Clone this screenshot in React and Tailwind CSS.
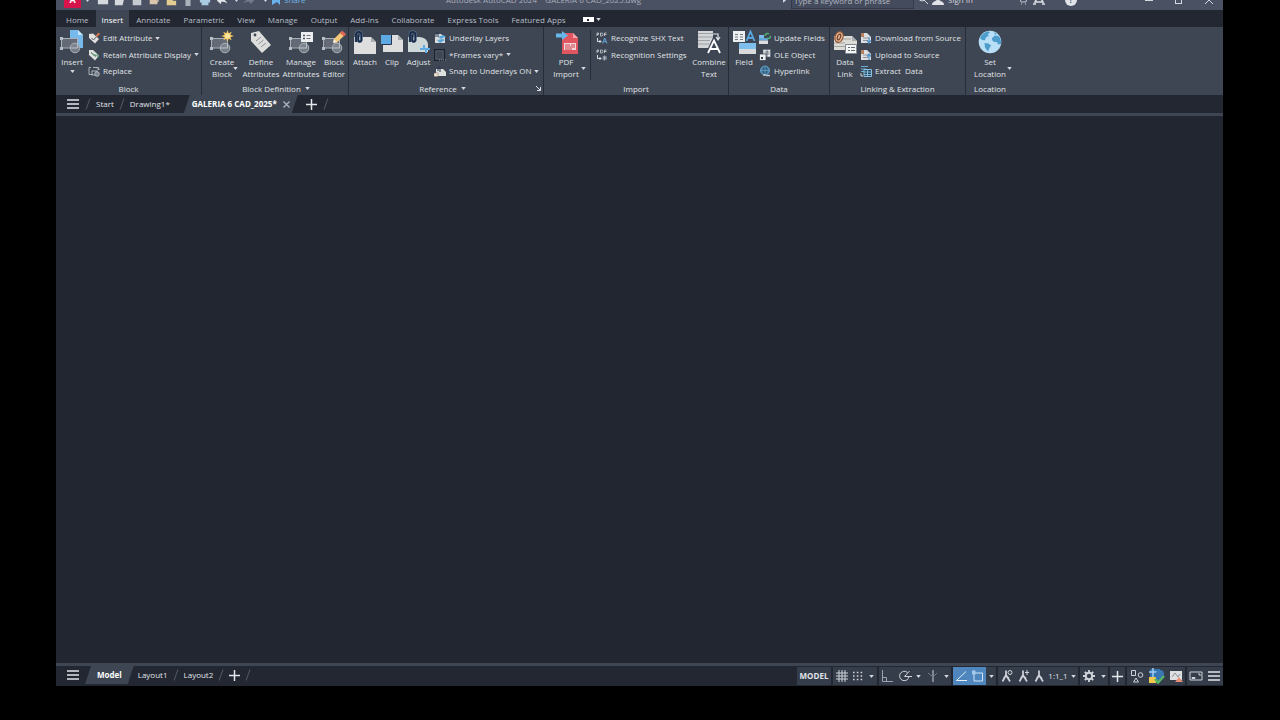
import React from "react";
import clsx from "clsx";

const MENU = ["Home", "Insert", "Annotate", "Parametric", "View", "Manage", "Output", "Add-ins", "Collaborate", "Express Tools", "Featured Apps"];

// ---------- shared bits ----------
const Caret = ({ className }) => (
  <svg viewBox="0 0 6 4" className={clsx("w-[5px] h-[3px] shrink-0 fill-[#d5d9df]", className)}>
    <path d="M0 0h6L3 4z" />
  </svg>
);

const Slash = () => (
  <svg viewBox="0 0 6 12" className="w-1.5 h-3 shrink-0 stroke-[#545b69] fill-none">
    <path d="M5 0.5L1 11.5" />
  </svg>
);

const Big = ({ children }) => (
  <svg viewBox="0 0 24 24" className="w-6 h-6 shrink-0" fill="none">{children}</svg>
);

const Small = ({ children }) => (
  <svg viewBox="0 0 12 12" className="w-3 h-3 shrink-0" fill="none">{children}</svg>
);

const Burger = () => (
  <svg viewBox="0 0 12 10" className="w-3 h-2.5" stroke="#e3e6ea" strokeWidth="1.5">
    <path d="M0 1h12M0 5h12M0 9h12" />
  </svg>
);

const Plus = () => (
  <svg viewBox="0 0 11 11" className="w-[11px] h-[11px]" stroke="#e3e6ea" strokeWidth="1.5">
    <path d="M5.5 0v11M0 5.5h11" />
  </svg>
);

// grey rectangle with a circle on its corner, used by every block tool
const BlockShape = () => (
  <>
    <rect x="1.5" y="8.5" width="16" height="9.5" fill="#646b76" stroke="#a9afb8" />
    <path d="M0 7h3v3H0zM0 17h3v3H0z" fill="#b9bec6" />
    <circle cx="15" cy="18" r="4.8" fill="#858b95" fillOpacity="0.8" stroke="#aab0b9" />
    <path d="M10.5 18H17.5V13.5" stroke="#c3c8cf" strokeWidth="0.8" />
  </>
);

const Page = () => <path d="M1 7h17l5 5v12H1z" fill="#dddedd" />;
const Clip = () => (
  <>
    <path d="M3 12V4.500a2.700 2.700 0 0 1 5.400 0V10a1.600 1.600 0 0 1-3.200 0V5" stroke="#6c86a8" strokeWidth="2.600" />
    <path d="M3 12V4.500a2.700 2.700 0 0 1 5.400 0V10a1.600 1.600 0 0 1-3.200 0V5" stroke="#182a46" strokeWidth="1.800" />
  </>
);

// ---------- large icons ----------
const InsertIcon = () => (
  <Big>
    <path d="M10 0h8l5 5v13H10z" fill="#76b9ea" />
    <path d="M18 0v5h5z" fill="#c5e3f8" />
    <BlockShape />
  </Big>
);
const CreateIcon = () => (
  <Big>
    <BlockShape />
    <path d="M17.500 0l1.200 3.300 3-1.500-1.300 3.100 3.600 1.100-3.600 1.200 1.300 3-3-1.400-1.200 3.200-1.200-3.200-3 1.400 1.300-3L11 6l3.600-1.100-1.300-3.100 3 1.500z" fill="#f5c964" />
    <circle cx="17.500" cy="6" r="2.500" fill="#ffe6a0" />
  </Big>
);
const TagIcon = () => (
  <Big>
    <path d="M2 3l8-2 12 14-9 8L2 11z" fill="#dddedc" />
    <circle cx="6" cy="5" r="1.400" fill="#3b4453" />
    <path d="M7 11l5-4M9.500 14l5-4M12 17l5-4" stroke="#8c9299" strokeWidth="1" />
  </Big>
);
const ManageIcon = () => (
  <Big>
    <BlockShape />
    <path d="M12 2h12v10H12z" fill="#eceeef" />
    <path d="M14 5.500h2M14 8.500h2" stroke="#4a5261" strokeWidth="1.400" />
    <path d="M17.500 5.500h4M17.500 8.500h4" stroke="#70757f" />
  </Big>
);
const EditorIcon = () => (
  <Big>
    <BlockShape />
    <path d="M11 13l1-4 7-7 3.500 3.500-7.500 7z" fill="#f2c778" />
    <path d="M18 3l2-2.500L24 4l-2 2.500z" fill="#dd6657" />
    <path d="M11 13l1-4 3 3z" fill="#f3eee1" />
  </Big>
);
const AttachIcon = () => (
  <Big>
    <Page />
    <path d="M18 7v5h5z" fill="#a9adb1" />
    <Clip />
  </Big>
);
const ClipIcon = () => (
  <Big>
    <path d="M3 5h15l5 5v12H3z" fill="#dddedd" />
    <path d="M18 5v5h5z" fill="#a9adb1" />
    <path d="M1 5h10v9H1z" fill="#5fa9e2" />
    <path d="M11.500 5v9.500H2" stroke="#25344b" />
  </Big>
);
const AdjustIcon = () => (
  <Big>
    <path d="M1 7h11c6 0 9 4 9 8v7H1z" fill="#cfd8d8" />
    <Clip />
    <path d="M13 18h3v-3h2v3h5v2h-3v3h-2v-3h-5z" fill="#62ace3" />
  </Big>
);
const PdfIcon = () => (
  <Big>
    <path d="M8 3h11l5 5v16H8z" fill="#df5560" />
    <path d="M19 3v5h5z" fill="#f4a7ac" />
    <path d="M10 13h12v7H10z" fill="#f1d7d9" />
    <path d="M11 15h5M11 17h10M17 15h4M11 19h7" stroke="#d33f4c" strokeWidth="1.200" />
    <path d="M2 3.500h6V1l6 4.500L8 10V7.500H2z" fill="#68b7ea" />
  </Big>
);
const CombineIcon = () => (
  <Big>
    <path d="M1 1h15v17H1z" fill="#d3d5d7" />
    <path d="M1 3.500h15M1 7h15M1 10.500h12M1 14h11" stroke="#8e939b" strokeWidth="0.800" />
    <path d="M16 4h5v5M19 7l2 3 2-3" stroke="#e2e5e8" strokeWidth="1.200" />
    <path d="M11 23l6-13 6 13M13.500 19h7" stroke="#3b4453" strokeWidth="4" />
    <path d="M11 23l6-12.500L23 23M13.500 19h7" stroke="#fff" strokeWidth="1.800" />
  </Big>
);
const FieldIcon = () => (
  <Big>
    <path d="M1 1h12v11H1z" fill="#eceef0" />
    <path d="M3 4.500h3M3 7h3M3 9.500h3M8 4.500h3M8 7h3M8 9.500h3" stroke="#737a86" />
    <path d="M14.500 11L18.500 1.500 22.500 11M16 8h5" stroke="#58a5de" strokeWidth="1.800" />
    <path d="M7 13h17v6H7z" fill="#7fbfee" />
    <path d="M7 19h17v5H7z" fill="#d9dadb" />
  </Big>
);
const LinkIcon = () => (
  <Big>
    <path d="M1 6h18l5 5v9H1z" fill="#dcdbd6" />
    <path d="M19 6v5h5z" fill="#a9adb1" />
    <path d="M1 13h11M1 16.500h11M9 9h9" stroke="#a2a49f" />
    <ellipse cx="6" cy="7" rx="4" ry="5.500" fill="#e8b48f" stroke="#8e5636" strokeWidth="1.200" transform="rotate(20 6 7)" />
    <ellipse cx="6" cy="7" rx="1.500" ry="3" stroke="#6f4632" strokeWidth="1.200" transform="rotate(20 6 7)" />
    <path d="M12.500 14.500H23.500v9H12.500z" fill="#f5f6f6" stroke="#828891" />
    <path d="M15 17.500h2M18 17.500h4M15 20.500h2M18 20.500h4" stroke="#626975" />
  </Big>
);
const GlobeIcon = () => (
  <Big>
    <circle cx="12" cy="12" r="11.300" fill="#b8dff6" />
    <path d="M2 8C3.500 4.500 6.500 2 10 1.200l2 1.500-2.500 1.500 1.500 1.500-3 1.500-1 3L4 10zM14 8l3-2.500 3.500.500c2.200 2.500 2.800 5 2.500 8l-3 .500-1-2.500-3 0L14 10zM6.500 13l4 .500 2.500 2-1.500 2.500-1.500 3.500-3-4zM16 2.200l3 1.500-2 1z" fill="#4c9ccc" />
  </Big>
);

// ---------- small icons ----------
const EditTag = () => (
  <Small>
    <path d="M1 2l4-.500L11 7l-4 4.500L1 6z" fill="#dfe0df" />
    <path d="M3.500 6l2 2 3.500-4" stroke="#59606b" />
    <path d="M7.500 4l3-3.500L12 2 9 5z" fill="#d9794f" />
  </Small>
);
const RetainTag = () => (
  <Small>
    <path d="M1 1l4 0 6 5.500-4 5L1 6z" fill="#dfe0df" />
    <path d="M3 3.500l5 4M5 6h5v3" stroke="#5c9270" strokeWidth="1.200" />
  </Small>
);
const ReplaceIcon = () => (
  <Small>
    <path d="M3 2.500H1v7h4M5 2.500h5.500V5M9 3.500l1.500 1.500L12 3.500" stroke="#b8bdc5" strokeWidth="0.900" />
    <rect x="4" y="6" width="5" height="4" stroke="#b8bdc5" strokeWidth="0.900" />
    <circle cx="9" cy="9" r="2.300" fill="#7b828d" stroke="#c1c6cd" strokeWidth="0.800" />
  </Small>
);
const LayersIcon = () => (
  <Small>
    <path d="M1 2h6l4 3v6H1z" fill="#d9dcdd" />
    <path d="M4 5l5-2 3 1.500-5 2.500zM3 8l6-1 2 1-5 3z" fill="#5ca5d8" />
    <path d="M2 5V2a1 1 0 0 1 2 0v3" stroke="#24334b" />
  </Small>
);
const FrameIcon = () => (
  <Small>
    <path d="M.500.500h10v11H.500z" stroke="#1b212d" strokeWidth="1.200" />
    <path d="M2 2h7v8H2z" stroke="#5c6574" strokeWidth="0.600" />
    <path d="M5 11h7" stroke="#8d94a0" strokeDasharray="1 1" />
  </Small>
);
const SnapIcon = () => (
  <Small>
    <path d="M2 4h7l3 3v4H2z" fill="#dedfdf" />
    <path d="M4 6V3a1 1 0 0 1 2 0v4" stroke="#24334b" />
    <path d="M0 8h4v3.500H0z" fill="#f0e9dd" stroke="#85624a" strokeWidth="0.500" />
  </Small>
);
const ShxIcon = ({ gear }) => (
  <Small>
    <path d="M1 4V1h1.500v1.500H1M4.500 1v3h1a1.500 1.500 0 0 0 0-3zM8.500 4V1H10.500M8.500 2.500h2" stroke="#d0d4da" strokeWidth="0.800" />
    <path d="M1.500 6v3.500H5M3.500 8L5 9.500 3.500 11" stroke="#d8dce1" />
    {gear
      ? <path d="M8.500 6.500v5M6.500 9H11M7 7.200l3.200 3.600M10.200 7.200L7 10.800" stroke="#aeb9c9" strokeWidth="0.900" />
      : <path d="M6.500 11.500L8.700 6 11 11.500M7.300 9.700H10" stroke="#67a8dd" />}
  </Small>
);
const UpdateIcon = () => (
  <Small>
    <path d="M0 3h5v3H0z" fill="#7cbbe9" />
    <path d="M0 6h9v2.500H0z" fill="#62a6da" />
    <path d="M0 8.500h9V12H0z" fill="#dadcdd" />
    <path d="M6 4a2.500 2.500 0 0 1 4-2M11.500 3.500a2.500 2.500 0 0 1-4 2.500" stroke="#52b077" strokeWidth="1.500" />
  </Small>
);
const OleIcon = () => (
  <Small>
    <path d="M4 .500h7.500V8H4z" fill="#ebedef" stroke="#555d6a" strokeWidth="0.600" />
    <path d="M5.500 3h5M5.500 5h5M8 1v7" stroke="#434b5a" strokeWidth="0.700" />
    <path d="M.500 5H7v6.500H.500z" fill="#eceeef" stroke="#343c49" strokeWidth="0.700" />
    <path d="M2 8h2v2H2z" fill="#343c49" />
  </Small>
);
const HyperIcon = () => (
  <Small>
    <circle cx="6" cy="5.500" r="4.500" fill="#315f80" stroke="#6fb1d9" strokeWidth="0.800" />
    <path d="M1.500 5.500h9M6 1v9M3.500 2c-1 2-1 5 0 7M8.500 2c1 2 1 5 0 7" stroke="#76b5da" strokeWidth="0.600" />
    <path d="M4 10h3M7 10.500h4" stroke="#c2c7ce" strokeWidth="1.500" />
  </Small>
);
const SheetIcon = ({ up }) => (
  <Small>
    <path d="M1 1h6l4 4v6H1z" fill="#dcdedf" />
    <path d="M1 1h3v4H1z" fill="#b5805f" />
    <path d="M3 6h5M3 8.500h5" stroke="#7b828d" strokeWidth="0.800" />
    {up
      ? <path d="M9 11V6M7 7.500L9 5l2 2.500" stroke="#5694c6" strokeWidth="1.300" />
      : <path d="M9 5v5M7 8.500l2 2.500 2-2.500" stroke="#5694c6" strokeWidth="1.300" />}
  </Small>
);
const ExtractIcon = () => (
  <Small>
    <path d="M1 1.500h7M1 4h5M1 6.500h3" stroke="#68abd7" strokeWidth="1.200" />
    <path d="M4 4.500h7.500v7H4z" fill="#224b68" stroke="#9acbea" strokeWidth="0.900" />
    <path d="M4 7h7.500M4 9.500h7.500M7.500 4.500v7" stroke="#9acbea" strokeWidth="0.800" />
    <path d="M1 8v3h2" stroke="#cdd2d8" />
  </Small>
);

// ---------- ribbon data ----------
const PANELS = [
  {
    title: "Block", width: "w-[146px]",
    big: [{ icon: <InsertIcon />, label: ["Insert"], width: "w-8", under: true }],
    rows: [
      { icon: <EditTag />, label: "Edit Attribute", caret: true },
      { icon: <RetainTag />, label: "Retain Attribute Display", caret: true },
      { icon: <ReplaceIcon />, label: "Replace" },
    ],
  },
  {
    title: "Block Definition", width: "w-[147px] pl-0.5", more: true,
    big: [
      { icon: <CreateIcon />, label: ["Create", "Block"], width: "w-9", caret: true },
      { icon: <TagIcon />, label: ["Define", "Attributes"], width: "w-[42px]" },
      { icon: <ManageIcon />, label: ["Manage", "Attributes"], width: "w-[38px]" },
      { icon: <EditorIcon />, label: ["Block", "Editor"], width: "w-7" },
    ],
  },
  {
    title: "Reference", width: "w-[195px]", more: true, launcher: true,
    big: [
      { icon: <AttachIcon />, label: ["Attach"], width: "w-8" },
      { icon: <ClipIcon />, label: ["Clip"], width: "w-[22px]" },
      { icon: <AdjustIcon />, label: ["Adjust"], width: "w-[31px]" },
    ],
    rows: [
      { icon: <LayersIcon />, label: "Underlay Layers" },
      { icon: <FrameIcon />, label: "*Frames vary*", caret: true },
      { icon: <SnapIcon />, label: "Snap to Underlays ON", caret: true },
    ],
  },
  {
    title: "Import", width: "w-[185px]",
    big: [{ icon: <PdfIcon />, label: ["PDF", "Import"], width: "w-11", caret: true }],
    divider: true,
    rows: [
      { icon: <ShxIcon />, label: "Recognize SHX Text" },
      { icon: <ShxIcon gear />, label: "Recognition Settings" },
    ],
    tail: [{ icon: <CombineIcon />, label: ["Combine", "Text"], width: "w-[38px]" }],
  },
  {
    title: "Data", width: "w-[101px]",
    big: [{ icon: <FieldIcon />, label: ["Field"], width: "w-[30px]" }],
    rows: [
      { icon: <UpdateIcon />, label: "Update Fields" },
      { icon: <OleIcon />, label: "OLE Object" },
      { icon: <HyperIcon />, label: "Hyperlink" },
    ],
  },
  {
    title: "Linking & Extraction", width: "w-[136px]",
    big: [{ icon: <LinkIcon />, label: ["Data", "Link"], width: "w-[30px]" }],
    rows: [
      { icon: <SheetIcon />, label: "Download from Source" },
      { icon: <SheetIcon up />, label: "Upload to Source" },
      { icon: <ExtractIcon />, label: "Extract  Data" },
    ],
  },
  {
    title: "Location", width: "w-12", last: true,
    big: [{ icon: <GlobeIcon />, label: ["Set", "Location"], width: "w-12", caret: true }],
  },
];

function BigButton({ item }) {
  return (
    <button className={clsx("relative flex flex-col items-center shrink-0 h-[50px] leading-[12px]", item.width)}>
      {item.icon}
      <span className="flex flex-col items-center pt-0.5">
        {item.label.map((line) => <span key={line}>{line}</span>)}
      </span>
      {item.under && <Caret className="mt-0.5" />}
      {item.caret && <Caret className="absolute right-0.5 bottom-2.5" />}
    </button>
  );
}

function Panel({ panel }) {
  return (
    <section className={clsx("flex flex-col shrink-0 pt-[3px]", panel.width, !panel.last && "border-r border-[#272d38]")}>
      <div className="flex h-[52px]">
        {panel.big.map((item) => <BigButton key={item.label.join(" ")} item={item} />)}
        {panel.divider && <div className="w-px h-[50px] bg-[#272d38] ml-0.5 mr-[5px]" />}
        {panel.rows && (
          <div className={clsx("flex flex-col h-[49px] flex-1", panel.rows.length === 3 ? "justify-between" : "gap-px")}>
            {panel.rows.map((row) => (
              <button key={row.label} className="flex items-center h-4 gap-[3px] whitespace-pre">
                {row.icon}
                {row.label}
                {row.caret && <Caret />}
              </button>
            ))}
          </div>
        )}
        {panel.tail?.map((item) => <BigButton key={item.label.join(" ")} item={item} />)}
      </div>
      <div className="flex items-center h-[13px]">
        <h2 className="flex flex-1 items-center justify-center gap-1 whitespace-nowrap">
          {panel.title}
          {panel.more && <Caret />}
        </h2>
        {panel.launcher && (
          <button aria-label="Reference settings" className="mr-0.5">
            <svg viewBox="0 0 5 5" className="w-[5px] h-[5px]" stroke="#dfe2e6" fill="none"><path d="M0 0l4.500 4.500M4.500 1v3.500H1" /></svg>
          </button>
        )}
      </div>
    </section>
  );
}

// ---------- title bar ----------
const QUICK = [
  { name: "New", d: "M1 5h12v8H1z", fill: "#d5d8dc" },
  { name: "Open", d: "M1 5h4l1 1h6l-2 8H1z", fill: "#d5d8dc" },
  { name: "Save", d: "M2 3h10v11H2zM4 9h6v5H4z", fill: "#c5cad1" },
  { name: "Save As", d: "M2 3h9v10H2zM8 12l4-4 1 1-4 4z", fill: "#d9c5ae" },
  { name: "Open from Web", d: "M2 4h7v10H2zM8 9h5v5H8z", fill: "#e3cc91" },
  { name: "Save to Mobile", d: "M4 2h6v13H4z", fill: "#a9b1bb" },
  { name: "Plot", d: "M1 6h12v5H1zM3 11h8v3H3z", fill: "#a9cbdf" },
  { name: "Undo", d: "M1 9l5-5v3c4 0 6 2 7 5-2-2-4-2-7-2v3z", fill: "#e1e4e8" },
];

function TitleBar() {
  return (
    <header className="h-2.5 overflow-hidden bg-[#4a5163] text-[#a9aebb]">
      <div className="flex items-center h-5 -mt-2.5">
        <div className="flex items-center w-[390px] shrink-0 pl-2">
          <button aria-label="Application menu" className="flex items-center justify-center w-[17px] h-[15px] bg-[#d5144b] text-white text-[9px] font-bold">A</button>
          <Caret className="ml-1" />
          <div className="flex pl-1">
            {QUICK.map((q) => (
              <button key={q.name} aria-label={q.name} className="flex justify-center w-[17px]">
                <svg viewBox="0 0 14 16" className="w-3 h-4"><path d={q.d} fill={q.fill} /></svg>
              </button>
            ))}
          </div>
          <Caret className="ml-1" />
          <svg viewBox="0 0 14 16" className="w-3 h-4 mx-1"><path d="M13 9L8 4v3C4 7 2 9 1 12c2-2 4-2 7-2v3z" fill="#727989" /></svg>
          <Caret className="mx-1" />
          <button className="flex items-center gap-1 text-[#72b9ed]">
            <svg viewBox="0 0 8 12" className="w-2 h-3"><path d="M0 3l8-2v10l-3-3-5 3z" fill="#69b2ec" /></svg>
            Share
          </button>
        </div>
        <h1 className="flex-1 whitespace-pre">Autodesk AutoCAD 2024    GALERIA 6 CAD_2025.dwg</h1>
        <div className="flex items-center w-[441px] shrink-0 gap-1">
          <Caret className="-rotate-90" />
          <input aria-label="Search" placeholder="Type a keyword or phrase" className="w-[123px] h-[17px] px-0.5 bg-[#444b5c] border border-[#343a48] placeholder:text-[#b0b5c0]" />
          <button aria-label="Find">
            <svg viewBox="0 0 10 12" className="w-2.5 h-3" stroke="#d5d8de" fill="none"><circle cx="4" cy="4" r="3" /><path d="M6 6l4 4" /></svg>
          </button>
          <button className="flex items-center gap-1 text-[#d5d8de]">
            <svg viewBox="0 0 12 12" className="w-3 h-3" fill="#dfe2e6"><circle cx="6" cy="4" r="3" /><path d="M0 11c0-6 12-6 12 0z" /></svg>
            Sign In
          </button>
          <div className="flex items-center ml-10 gap-1.5">
            <svg viewBox="0 0 10 12" className="w-2.5 h-3" stroke="#c5cad1" fill="none"><path d="M0 1h2l2 7h5l1-5H3" /><path d="M4 10h1M8 10h1" /></svg>
            <svg viewBox="0 0 12 12" className="w-3 h-3" stroke="#e0e3e7" strokeWidth="1.500" fill="none"><path d="M6 1l4 7H2z" /><path d="M0 10h3M9 10h3" /></svg>
            <span className="flex items-center justify-center w-3 h-3 ml-3.5 rounded-full bg-[#e1e4e8] text-[#4a5163] font-bold">?</span>
          </div>
          <div className="flex items-center justify-between flex-1 pl-16 pr-2.5">
            <button aria-label="Minimize" className="w-2 h-px bg-[#d5d8de]" />
            <button aria-label="Maximize" className="w-[7px] h-[7px] border border-[#d5d8de]" />
            <button aria-label="Close">
              <svg viewBox="0 0 8 8" className="w-2 h-2" stroke="#d5d8de"><path d="M0 0l8 8M8 0L0 8" /></svg>
            </button>
          </div>
        </div>
      </div>
    </header>
  );
}

// ---------- status bar ----------
const Glyph = ({ children }) => (
  <svg viewBox="0 0 14 14" className="w-3.5 h-3.5" stroke="#d0d4da" fill="none">{children}</svg>
);
const Person = ({ children }) => (
  <Glyph>
    <path d="M6 1.500v5M6 6L2.500 12.500M6 6l4 6.500M3.500 9.500L6 7l3 2.500" strokeWidth="1.700" />
    {children}
  </Glyph>
);

const STATUS = [
  [{ name: "Model space", width: "w-[34px]", node: <b className="font-bold">MODEL</b> }],
  [
    { name: "Grid", width: "w-[17px]", node: <Glyph><path d="M1 4h12M1 7h12M1 10h12M4 1v12M7 1v12M10 1v12" /></Glyph> },
    { name: "Snap", width: "w-4", node: <Glyph><path d="M2 3.500h10M2 7h10M2 10.500h10" strokeWidth="1.600" strokeDasharray="1.600 2.200" /></Glyph> },
    { name: "Snap options", width: "w-[11px]", node: <Caret /> },
  ],
  [
    { name: "Ortho", width: "w-4", node: <Glyph><path d="M2.500 1v11.500H13M3 8.500h3.500v4" stroke="#9da4af" /></Glyph> },
    { name: "Polar", width: "w-[19px]", node: <Glyph><path d="M9.500 3.500A4.700 4.700 0 1 0 11 7.500H6.500L11.500 2M11 7.500h3" /></Glyph> },
    { name: "Polar options", width: "w-[9px]", node: <Caret /> },
    { name: "Isometric", width: "w-[19px]", node: <Glyph><path d="M7 1v12" /><path d="M2 4l5 4 4-4" stroke="#737b88" /></Glyph> },
    { name: "Isometric options", width: "w-[9px]", node: <Caret /> },
  ],
  [
    { name: "Object snap tracking", width: "w-4", on: true, node: <Glyph><path d="M12 2.500L2.500 11.500H13" stroke="#e5f0fb" /></Glyph> },
    { name: "Object snap", width: "w-[17px]", on: true, node: <Glyph><path d="M3 4h8.500v8H3z" stroke="#d3e5f6" /><path d="M1 1.500h3.500v4H1z" fill="#a5caea" stroke="none" /></Glyph> },
    { name: "Object snap options", width: "w-2.5", node: <Caret /> },
  ],
  [
    { name: "Annotation visibility", width: "w-[18px]", node: <Person><circle cx="10" cy="3.500" r="2" /></Person> },
    { name: "Auto scale", width: "w-4", node: <Person><path d="M10 1v5M8 3.500h4" /></Person> },
    { name: "Annotation scale icon", width: "w-4", node: <Person /> },
    { name: "Annotation scale", width: "w-5", node: <span>1:1_1</span> },
    { name: "Scale list", width: "w-2.5", node: <Caret /> },
  ],
  [
    { name: "Workspace", width: "w-[18px]", node: <Glyph><circle cx="7" cy="7" r="3.200" strokeWidth="2" /><path d="M7 1v2.500M7 10.500V13M1 7h2.500M10.500 7H13M2.800 2.800l1.700 1.700M9.500 9.500l1.700 1.700M11.200 2.800L9.500 4.500M4.500 9.500l-1.700 1.700" strokeWidth="1.800" /></Glyph> },
    { name: "Workspace list", width: "w-2.5", node: <Caret /> },
  ],
  [{ name: "Annotation monitor", width: "w-[15px]", node: <Plus /> }],
  [
    { name: "Isolate objects", width: "w-5", node: <Glyph><path d="M1.500 1.500h4v5h-4z" /><circle cx="10.500" cy="6" r="2.300" /><path d="M6 9l2.500 4h-5z" /></Glyph> },
    {
      name: "Graphics performance", width: "w-[19px]",
      node: (
        <svg viewBox="0 0 17 16" className="w-[17px] h-4" fill="none">
          <path d="M2 1h10v11H2z" fill="#3275b7" />
          <path d="M1 4h13M5 0v13" stroke="#a1cbee" strokeWidth="1.500" />
          <circle cx="12" cy="6" r="4" fill="#3978b4" />
          <path d="M1 9h7v6H1z" fill="#f1ca4d" />
          <path d="M7 11l3 3.500L16 8" stroke="#57b568" strokeWidth="2.500" />
        </svg>
      ),
    },
    { name: "Notifications", width: "w-[19px]", node: <Glyph><path d="M1 2h12v9H1z" fill="#dddfe1" stroke="none" /><path d="M3 8l3-4 3 4 2-3" stroke="#86919d" /><path d="M6 13l4-5 4 5z" fill="#e88f78" stroke="none" /></Glyph> },
  ],
  [
    { name: "Clean screen", width: "w-[17px]", node: <Glyph><path d="M1 3h12v8H1z" /><path d="M3 8.500h3v1H3zM9 5h2v2" /></Glyph> },
    { name: "Customization", width: "w-[19px]", node: <Burger /> },
  ],
];

function StatusBar() {
  return (
    <div className="flex gap-0.5 h-[18px]">
      {STATUS.map((group, i) => (
        <div key={i} className="flex bg-[#353d4a]">
          {group.map((cell) => (
            <button key={cell.name} aria-label={cell.name} className={clsx("flex items-center justify-center shrink-0", cell.width, cell.on && "bg-[#4e86bd]")}>
              {cell.node}
            </button>
          ))}
        </div>
      ))}
    </div>
  );
}

export default function App() {
  return (
    <div className="flex flex-col min-h-screen bg-black pl-14 pr-[57px] pb-[34px] font-['Open_Sans','Noto_Sans',sans-serif] text-[8px] text-[#e0e3e8]">
      <TitleBar />

      <nav className="flex items-center h-[17px] pl-1 gap-px bg-[#222731] text-[#b9bec8]">
        {MENU.map((name) => (
          <button key={name} className={clsx("h-full px-1.5 pt-0.5 whitespace-nowrap", name === "Insert" && "bg-[#3d4652] text-white")}>{name}</button>
        ))}
        <button aria-label="Ribbon display" className="flex items-center gap-0.5 ml-2.5 pt-0.5">
          <span className="flex items-center justify-center w-[11px] h-[5px] bg-white"><span className="w-0.5 h-0.5 bg-[#222731]" /></span>
          <Caret />
        </button>
      </nav>

      <div className="flex h-[68px] bg-[#3d4652]">
        {PANELS.map((panel) => <Panel key={panel.title} panel={panel} />)}
      </div>

      <div className="flex items-center h-[18px] pl-[11px] bg-[#222731]">
        <button aria-label="File tabs menu"><Burger /></button>
        <div className="flex items-center pl-1.5 gap-[5px]">
          <Slash />
          <button>Start</button>
          <Slash />
          <button>Drawing1*</button>
        </div>
        <div className="flex items-center h-full ml-3.5 pl-2 pr-1.5 gap-1 bg-[#3d4652] text-white [clip-path:polygon(6px_0,100%_0,calc(100%-6px)_100%,0_100%)]">
          <button className="font-bold whitespace-nowrap">GALERIA 6 CAD_2025*</button>
          <button aria-label="Close tab" className="px-0.5">
            <svg viewBox="0 0 7 7" className="w-[7px] h-[7px]" stroke="#aeb4be" strokeWidth="1.300"><path d="M.500.500l6 6M6.500.500l-6 6" /></svg>
          </button>
        </div>
        <div className="flex items-center pl-2 gap-1.5">
          <button aria-label="New drawing"><Plus /></button>
          <Slash />
        </div>
      </div>

      <main className="flex-1 bg-[#222630] border-t-[3px] border-b-[3px] border-[#3d4652]" />

      <footer className="flex items-center justify-between h-5 bg-[#222731]">
        <div className="flex items-center h-full pl-[11px] pb-0.5">
          <button aria-label="Layout menu"><Burger /></button>
          <button className="h-full ml-1.5 px-3 bg-[#3d4652] text-white font-bold [clip-path:polygon(6px_0,100%_0,calc(100%-6px)_100%,0_100%)]">Model</button>
          <div className="flex items-center gap-[5px] pl-1">
            <button>Layout1</button>
            <Slash />
            <button>Layout2</button>
            <Slash />
            <button aria-label="New layout"><Plus /></button>
            <Slash />
          </div>
        </div>
        <StatusBar />
      </footer>
    </div>
  );
}
